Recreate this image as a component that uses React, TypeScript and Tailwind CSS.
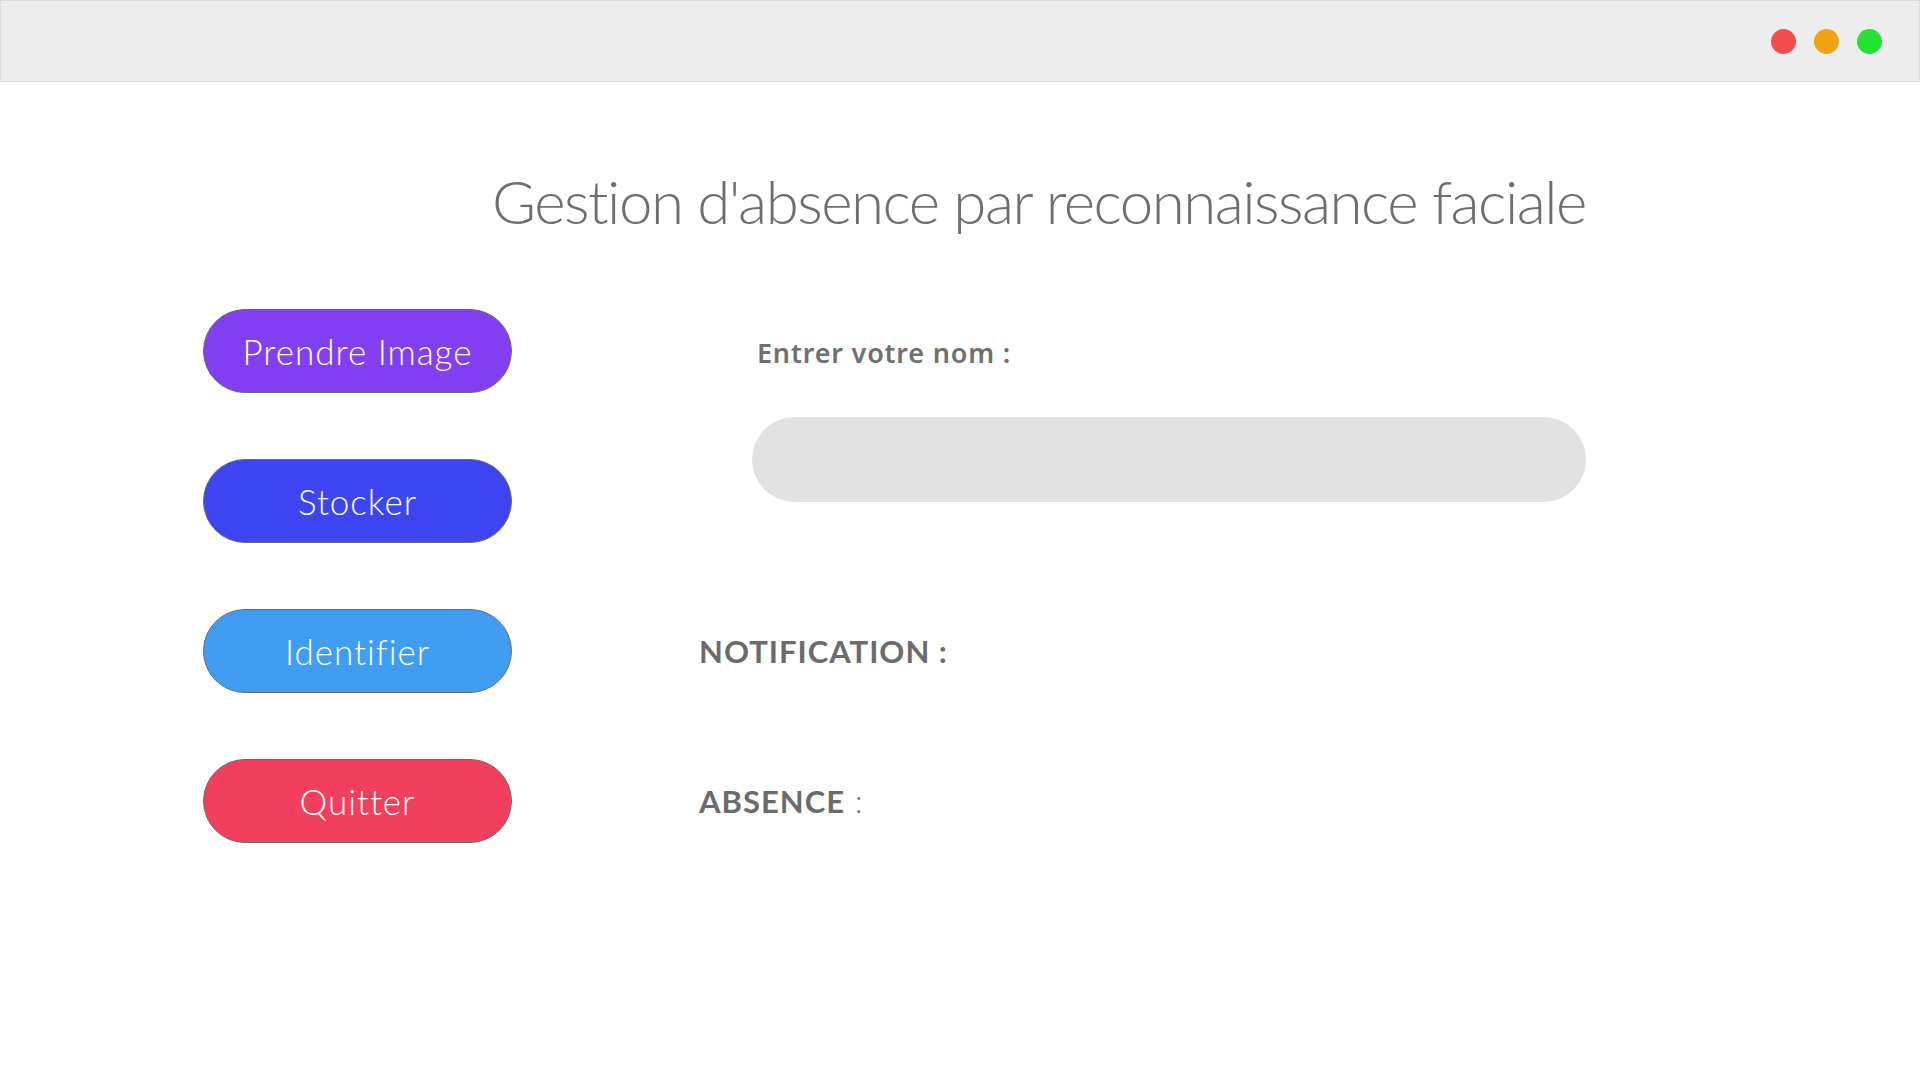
const buttons = [
  { label: "Prendre Image", color: "bg-[#823ff2]" },
  { label: "Stocker", color: "bg-[#3c45f1]" },
  { label: "Identifier", color: "bg-[#3f9df2]" },
  { label: "Quitter", color: "bg-[#f23f5d]" },
];

function TitleBar() {
  return (
    <div className="flex h-[82px] items-center justify-end gap-[18px] border border-[#dcdcdc] bg-[#ededed] pr-[37px]">
      <span className="h-[25px] w-[25px] rounded-full bg-[#f24c4c]" />
      <span className="h-[25px] w-[25px] rounded-full bg-[#f0a412]" />
      <span className="h-[25px] w-[25px] rounded-full bg-[#22e331]" />
    </div>
  );
}

export default function App() {
  return (
    <div
      className="min-h-screen w-full bg-white text-[#6b6b6b]"
      style={{ fontFamily: "Lato, 'Open Sans', sans-serif" }}
    >
      <TitleBar />
      <h1 className="pl-[492px] pt-[83px] text-[60px] font-light leading-[72px] tracking-[-1.5px] text-[#6e6e6e]">
        Gestion d&apos;absence par reconnaissance faciale
      </h1>

      <div className="mt-[72px] grid grid-cols-[309px_1fr] grid-rows-[84px_84px_84px_84px] gap-x-[187px] gap-y-[66px] pl-[203px]">
        {buttons.map((b, i) => (
          <button
            key={b.label}
            className={`${b.color} col-start-1 flex items-center justify-center rounded-full border border-[#6b6b6b] text-[35px] font-light tracking-[1px] text-white`}
            style={{ gridRowStart: i + 1 }}
          >
            {b.label}
          </button>
        ))}

        <div className="col-start-2 row-span-2 row-start-1 flex flex-col">
          <div
            className="flex h-[84px] items-center pl-[58px] pt-[4px] text-[27px] font-semibold tracking-[0.8px] text-[#707070]"
            style={{ fontFamily: "'Noto Sans', sans-serif" }}
          >
            Entrer votre nom :
          </div>
          <input
            type="text"
            className="ml-[53px] mt-[24px] h-[85px] w-[834px] rounded-full bg-[#e2e2e2] px-8 text-[28px] outline-none"
          />
        </div>

        <div className="col-start-2 row-start-3 flex items-center text-[31px] font-bold tracking-[1px]">
          NOTIFICATION :
        </div>
        <div className="col-start-2 row-start-4 flex items-center text-[31px] font-bold tracking-[1px]">
          ABSENCE <span className="ml-[10px] font-light">:</span>
        </div>
      </div>
    </div>
  );
}
